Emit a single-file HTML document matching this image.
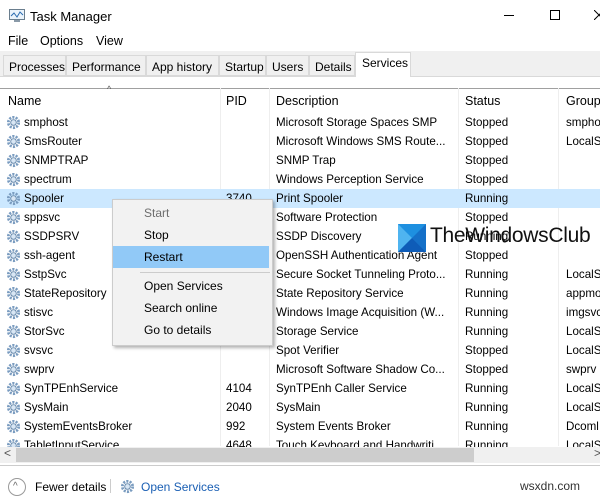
<!DOCTYPE html>
<html><head><style>
*{margin:0;padding:0;box-sizing:border-box}
body{width:600px;height:493px;overflow:hidden;background:#fff;font-family:"Liberation Sans",sans-serif;font-size:12px;color:#000;position:relative}
.a{position:absolute;white-space:nowrap}
.tab{position:absolute;top:55px;height:21px;border:1px solid #d9d9d9;background:#f0f0f0;padding:4px 0 0 5px;font-size:12px}
.row{position:absolute;left:0;width:600px;height:19px}
.row span{position:absolute;top:3px;white-space:nowrap;font-size:11.6px}
.g{position:absolute;left:6px;top:2px;width:15px;height:15px}
.sep{position:absolute;top:88px;width:1px;height:358px;background:#eee}
.mi{position:absolute;left:144px;font-size:12px}
</style></head><body>
<svg class="a" style="left:9px;top:9px" width="16" height="14"><rect x="0.5" y="0.5" width="15" height="10" fill="#eaf3fb" stroke="#6a7e8e"/><polyline points="2,7 5,4 8,8 11,3 14,6" fill="none" stroke="#2a6bb0"/><rect x="5" y="11" width="6" height="2" fill="#8a9aa8"/></svg>
<div class="a" style="left:30px;top:9px;font-size:13px">Task Manager</div>
<div class="a" style="left:504px;top:15px;width:10px;height:1px;background:#000"></div>
<div class="a" style="left:550px;top:10px;width:10px;height:10px;border:1px solid #000"></div>
<svg class="a" style="left:594px;top:10px" width="10" height="10"><path d="M0 0L10 10M10 0L0 10" stroke="#000"/></svg>
<div class="a" style="left:8px;top:34px;font-size:12.5px">File</div>
<div class="a" style="left:40px;top:34px;font-size:12.5px">Options</div>
<div class="a" style="left:96px;top:34px;font-size:12.5px">View</div>
<div class="a" style="left:0;top:51px;width:600px;height:25px;background:#f0f0f0"></div>
<div class="a" style="left:0;top:76px;width:600px;height:1px;background:#d9d9d9"></div>
<div class="tab" style="left:3px;width:63px">Processes</div>
<div class="tab" style="left:66px;width:80px">Performance</div>
<div class="tab" style="left:146px;width:73px">App history</div>
<div class="tab" style="left:219px;width:47px">Startup</div>
<div class="tab" style="left:266px;width:43px">Users</div>
<div class="tab" style="left:309px;width:46px">Details</div>
<div class="a" style="left:355px;top:52px;width:56px;height:25px;background:#fff;border:1px solid #d9d9d9;border-bottom:none;padding:3px 0 0 6px;font-size:12px">Services</div>
<div class="a" style="left:0;top:88px;width:600px;height:1px;background:#a0a0a0"></div>
<div class="a" style="left:107px;top:84px;font-size:9px;color:#555">^</div>
<div class="sep" style="left:220px"></div><div class="sep" style="left:269px"></div><div class="sep" style="left:458px"></div><div class="sep" style="left:558px"></div>
<div class="a" style="left:8px;top:94px;font-size:12.5px">Name</div>
<div class="a" style="left:226px;top:94px;font-size:12.5px">PID</div>
<div class="a" style="left:276px;top:94px;font-size:12.5px">Description</div>
<div class="a" style="left:465px;top:94px;font-size:12.5px">Status</div>
<div class="a" style="left:566px;top:94px;font-size:12.5px">Group</div>
<div id="rows"></div>
<script>
var d=[["smphost","","Microsoft Storage Spaces SMP","Stopped","smpho"],["SmsRouter","","Microsoft Windows SMS Route...","Stopped","LocalS"],["SNMPTRAP","","SNMP Trap","Stopped",""],["spectrum","","Windows Perception Service","Stopped",""],["Spooler","3740","Print Spooler","Running",""],["sppsvc","","Software Protection","Stopped",""],["SSDPSRV","","SSDP Discovery","Running",""],["ssh-agent","","OpenSSH Authentication Agent","Stopped",""],["SstpSvc","","Secure Socket Tunneling Proto...","Running","LocalS"],["StateRepository","","State Repository Service","Running","appmo"],["stisvc","","Windows Image Acquisition (W...","Running","imgsvc"],["StorSvc","","Storage Service","Running","LocalS"],["svsvc","","Spot Verifier","Stopped","LocalS"],["swprv","","Microsoft Software Shadow Co...","Stopped","swprv"],["SynTPEnhService","4104","SynTPEnh Caller Service","Running","LocalS"],["SysMain","2040","SysMain","Running","LocalS"],["SystemEventsBroker","992","System Events Broker","Running","Dcoml"],["TabletInputService","4648","Touch Keyboard and Handwriti...","Running","LocalS"]];
var h="";d.forEach(function(r,i){var y=113+19*i;h+='<div class="row" style="top:'+y+'px;'+(i==4?'background:#cce8ff':'')+'"><svg class="g" viewBox="0 0 16 16"><circle cx="8" cy="8" r="5.5" fill="none" stroke="#7a9cc0" stroke-width="3" stroke-dasharray="2.2 1.3"/><circle cx="8" cy="8" r="3" fill="#d8e6f4" stroke="#6688aa"/></svg><span style="left:24px">'+r[0]+'</span><span style="left:226px">'+r[1]+'</span><span style="left:276px">'+r[2]+'</span><span style="left:465px">'+r[3]+'</span><span style="left:566px">'+r[4]+'</span></div>'});
document.getElementById("rows").innerHTML=h;
</script>
<div class="a" style="left:0;top:447px;width:600px;height:16px;background:#f0f0f0"></div>
<div class="a" style="left:16px;top:448px;width:458px;height:14px;background:#cdcdcd"></div>
<div class="a" style="left:4px;top:446px;font-size:12px;color:#555">&lt;</div>
<div class="a" style="left:594px;top:446px;font-size:12px;color:#555">&gt;</div>
<div class="a" style="left:0;top:465px;width:600px;height:1px;background:#ccc"></div>
<div class="a" style="left:8px;top:478px;width:18px;height:18px;border:1px solid #999;border-radius:50%"></div>
<div class="a" style="left:13px;top:481px;font-size:10px;color:#666">^</div>
<div class="a" style="left:35px;top:480px;font-size:12px">Fewer details</div>
<div class="a" style="left:110px;top:479px;width:1px;height:14px;background:#ccc"></div>
<svg class="a" style="left:120px;top:479px" width="15" height="15" viewBox="0 0 16 16"><circle cx="8" cy="8" r="5.5" fill="none" stroke="#7a9cc0" stroke-width="3" stroke-dasharray="2.2 1.3"/><circle cx="8" cy="8" r="3" fill="#d8e6f4" stroke="#6688aa"/></svg>
<div class="a" style="left:141px;top:480px;font-size:12px;color:#1a5fb4">Open Services</div>
<div class="a" style="left:520px;top:479px;font-size:12px;color:#333">wsxdn.com</div>
<div class="a" style="left:112px;top:199px;width:161px;height:147px;background:#f2f2f2;border:1px solid #ccc;box-shadow:2px 2px 3px rgba(0,0,0,.3)"></div>
<div class="a" style="left:113px;top:246px;width:156px;height:22px;background:#91c9f7"></div>
<div class="a" style="left:140px;top:272px;width:130px;height:1px;background:#ccc"></div>
<div class="mi" style="top:206px;color:#6d6d6d">Start</div>
<div class="mi" style="top:228px">Stop</div>
<div class="mi" style="top:250px">Restart</div>
<div class="mi" style="top:279px">Open Services</div>
<div class="mi" style="top:301px">Search online</div>
<div class="mi" style="top:323px">Go to details</div>
<svg class="a" style="left:398px;top:224px" width="28" height="28"><polygon points="0,0 28,0 28,28 0,28" fill="#1e90e0"/><polygon points="0,0 14,14 0,28" fill="#4fb4f0"/><polygon points="28,0 14,14 28,28" fill="#1570c8"/><polygon points="0,28 14,14 28,28" fill="#0e5cb8"/></svg>
<div class="a" style="left:430px;top:224px;font-size:21px;letter-spacing:-0.3px;color:#111">TheWindowsClub</div>
</body></html>
